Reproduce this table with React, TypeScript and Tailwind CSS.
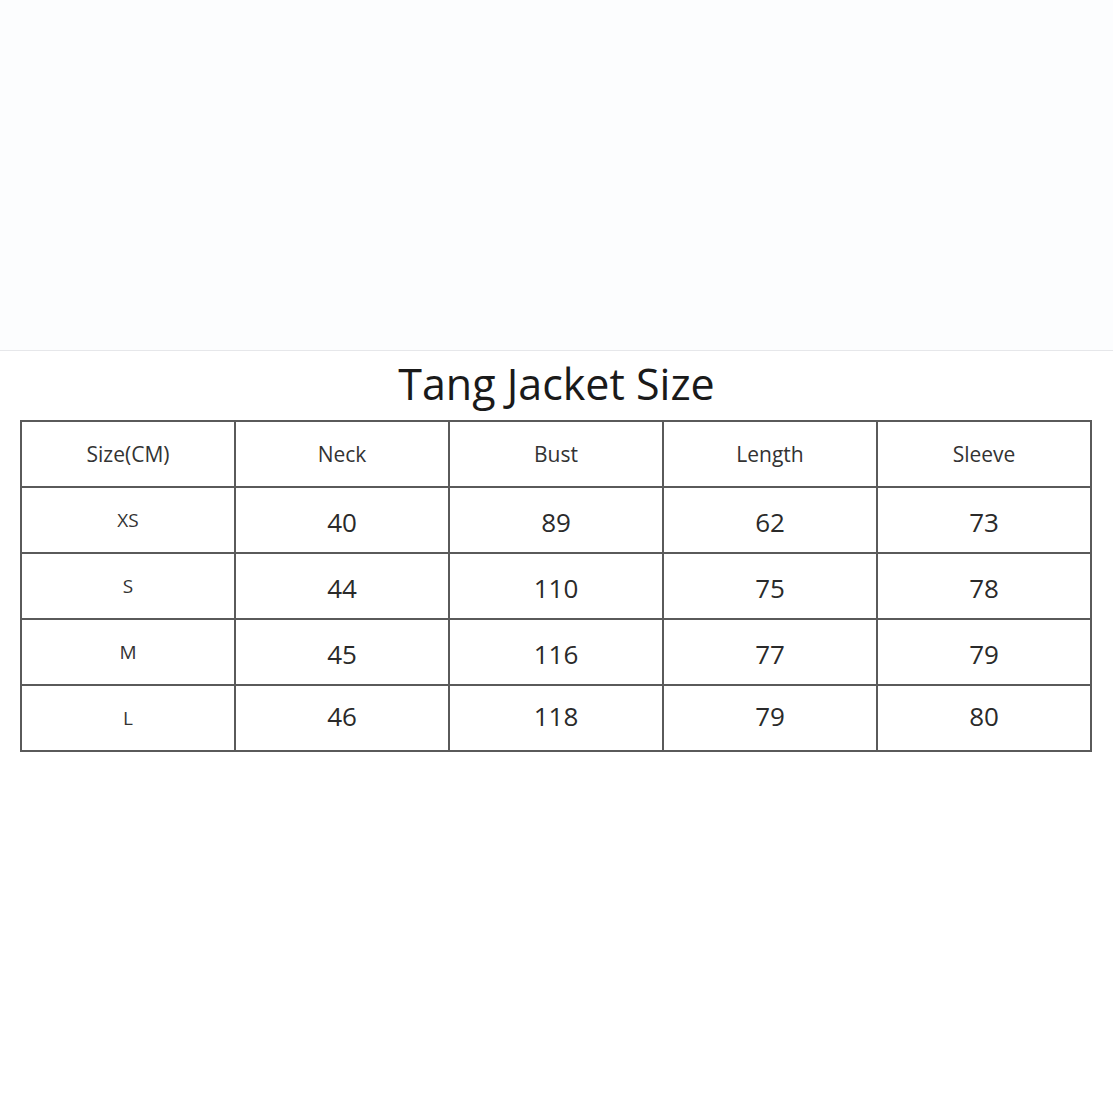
const headers = ['Size(CM)', 'Neck', 'Bust', 'Length', 'Sleeve'];

const rows: [string, string, string, string, string][] = [
  ['XS', '40', '89', '62', '73'],
  ['S', '44', '110', '75', '78'],
  ['M', '45', '116', '77', '79'],
  ['L', '46', '118', '79', '80'],
];

export default function App() {
  return (
    <div className="w-[1113px] h-[1113px] bg-white" style={{ fontFamily: '"Open Sans", "Liberation Sans", sans-serif' }}>
      {/* top blank band */}
      <div className="h-[351px] bg-[#fcfdfe] border-b border-[#e6e7ea]" />

      <h1 className="text-center text-[43px] leading-[48px] text-[#1a1a1a] mt-[9px]">
        Tang Jacket Size
      </h1>

      <div className="px-[20px] mt-[12px]">
        <table className="w-[1072px] table-fixed border-collapse border-2 border-[#5a5a5a] text-[#2a2a2a]">
          <thead>
            <tr className="h-[66px]">
              {headers.map((h) => (
                <th key={h} className="border-2 border-[#5a5a5a] font-medium text-[21px] text-[#333] pt-[2px]">
                  {h}
                </th>
              ))}
            </tr>
          </thead>
          <tbody>
            {rows.map((r, ri) => (
              <tr key={r[0]} className="h-[66px]">
                {r.map((v, i) => (
                  <td
                    key={i}
                    className={
                      i === 0
                        ? 'border-2 border-[#5a5a5a] text-center text-[19px] font-medium text-[#333]'
                        : ri === rows.length - 1
                          ? 'border-2 border-[#5a5a5a] text-center text-[26px] pb-[4px]'
                          : 'border-2 border-[#5a5a5a] text-center text-[26px] pt-[4px]'
                    }
                  >
                    {v}
                  </td>
                ))}
              </tr>
            ))}
          </tbody>
        </table>
      </div>
    </div>
  );
}
